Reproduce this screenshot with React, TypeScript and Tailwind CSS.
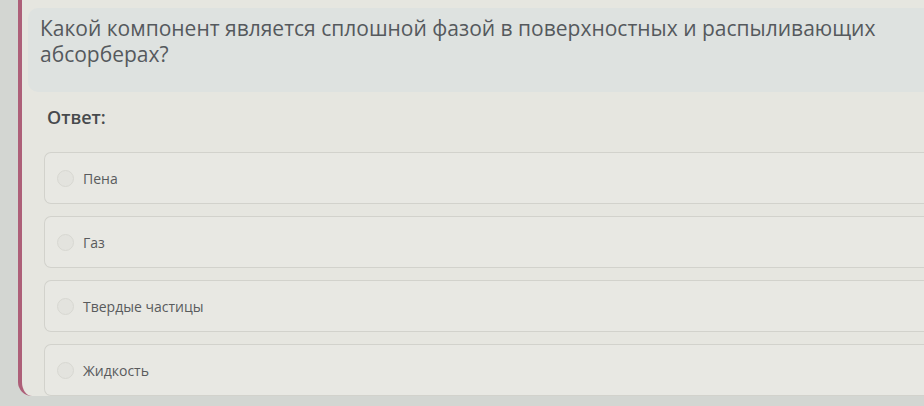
import React from 'react';

const options = ['Пена', 'Газ', 'Твердые частицы', 'Жидкость'];

const App: React.FC = () => {
  return (
    <div className="w-[924px] h-[406px] overflow-hidden bg-[#d3d6d2] flex pl-[18px] pb-[10px] font-['Open_Sans',sans-serif]">
      <div className="flex-1 bg-[#e6e6e0] border-l-[4px] border-[#ad5f78] rounded-bl-[14px] pt-[8px] pl-[6px] flex flex-col">
        {/* Question */}
        <div className="bg-[#dee2e0] rounded-l-[10px] h-[85px] pl-[12px] pt-[7px] text-[21px] leading-[26px] text-[#55595d]">
          Какой компонент является сплошной фазой в поверхностных и распыливающих
          <br />
          абсорберах?
        </div>

        <div className="pl-[19px] pt-[12px] h-[60px] text-[18px] font-semibold text-[#474a4d]">Ответ:</div>

        {/* Options */}
        <div className="flex flex-col gap-[12px] pl-[16px]">
          {options.map((opt) => (
            <div
              key={opt}
              className="h-[52px] border border-[#d2d2cc] border-r-0 rounded-l-[7px] bg-[#e8e8e3] flex items-center pl-[12px] gap-[9px]"
            >
              <span className="w-[17px] h-[17px] rounded-full border border-[#d8d8d2] bg-[#e3e3de]" />
              <span className="text-[14px] text-[#595b5d]">{opt}</span>
            </div>
          ))}
        </div>
      </div>
    </div>
  );
};

export default App;
